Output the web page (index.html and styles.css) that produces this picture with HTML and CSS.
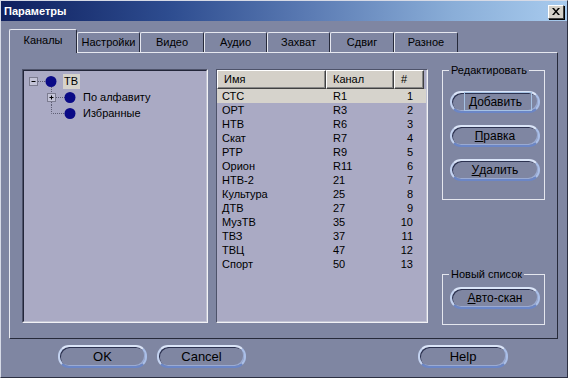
FILE: index.html
```html
<!DOCTYPE html>
<html>
<head>
<meta charset="utf-8">
<link rel="stylesheet" href="styles.css">
</head>
<body>
<div class="window">
  <div class="titlebar">
    <span class="title">Параметры</span>
    <span class="close"><svg width="8" height="7" viewBox="0 0 8 7"><path d="M0 0h2l2 2.4L6 0h2L5 3.5 8 7H6L4 4.6 2 7H0l3-3.5z" fill="#000"/></svg></span>
  </div>
  <div class="content">
    <div class="tabs">
      <div class="tab active">Каналы</div>
      <div class="tab narrow">Настройки</div>
      <div class="tab">Видео</div>
      <div class="tab narrow">Аудио</div>
      <div class="tab narrow">Захват</div>
      <div class="tab">Сдвиг</div>
      <div class="tab">Разное</div>
    </div>
    <div class="panel">
      <div class="tree sunken">
        <div class="sunken-in tree-body">
          <div class="node">
            <svg class="lines" width="38" height="16" viewBox="0 0 38 16">
              <rect x="5.5" y="4.5" width="8" height="8" fill="#c4c4d8" stroke="#7c7c90"/>
              <path d="M7.5 8.5h4" stroke="#000" fill="none"/>
              <path d="M14 8.5h8M27.5 14v2" stroke="#5e5e74" stroke-dasharray="1 1" fill="none"/>
              <circle cx="27" cy="8.5" r="5.5" fill="#0a0a86"/>
            </svg>
            <span class="label sel">ТВ</span>
          </div>
          <div class="node">
            <svg class="lines" width="58" height="16" viewBox="0 0 58 16">
              <path d="M27.5 0v4M27.5 13v3M32 8.5h9" stroke="#5e5e74" stroke-dasharray="1 1" fill="none"/>
              <rect x="23.5" y="4.5" width="8" height="8" fill="#c4c4d8" stroke="#7c7c90"/>
              <path d="M25.5 8.5h4M27.5 6.5v4" stroke="#000" fill="none"/>
              <circle cx="46" cy="8.5" r="5.5" fill="#0a0a86"/>
            </svg>
            <span class="label">По алфавиту</span>
          </div>
          <div class="node">
            <svg class="lines" width="58" height="16" viewBox="0 0 58 16">
              <path d="M27.5 0v8.5h13" stroke="#5e5e74" stroke-dasharray="1 1" fill="none"/>
              <circle cx="46" cy="8.5" r="5.5" fill="#0a0a86"/>
            </svg>
            <span class="label">Избранные</span>
          </div>
        </div>
      </div>

      <div class="list sunken">
        <div class="sunken-in list-body">
          <div class="list-head">
            <div class="hcell">Имя</div>
            <div class="hcell">Канал</div>
            <div class="hcell">#</div>
          </div>
          <div class="row selected"><span>СТС</span><span>R1</span><span class="num">1</span></div>
          <div class="row"><span>ОРТ</span><span>R3</span><span class="num">2</span></div>
          <div class="row"><span>НТВ</span><span>R6</span><span class="num">3</span></div>
          <div class="row"><span>Скат</span><span>R7</span><span class="num">4</span></div>
          <div class="row"><span>РТР</span><span>R9</span><span class="num">5</span></div>
          <div class="row"><span>Орион</span><span>R11</span><span class="num">6</span></div>
          <div class="row"><span>НТВ-2</span><span>21</span><span class="num">7</span></div>
          <div class="row"><span>Культура</span><span>25</span><span class="num">8</span></div>
          <div class="row"><span>ДТВ</span><span>27</span><span class="num">9</span></div>
          <div class="row"><span>МузТВ</span><span>35</span><span class="num">10</span></div>
          <div class="row"><span>ТВЗ</span><span>37</span><span class="num">11</span></div>
          <div class="row"><span>ТВЦ</span><span>47</span><span class="num">12</span></div>
          <div class="row"><span>Спорт</span><span>50</span><span class="num">13</span></div>
        </div>
      </div>

      <div class="side">
        <fieldset class="group edit">
          <legend>Редактировать</legend>
          <button class="btn"><span class="focus-box"><u>Д</u>обавить</span></button>
          <button class="btn"><u>П</u>равка</button>
          <button class="btn"><u>У</u>далить</button>
        </fieldset>
        <fieldset class="group scan">
          <legend>Новый список</legend>
          <button class="btn"><u>А</u>вто-скан</button>
        </fieldset>
      </div>
    </div>
    <div class="footer">
      <button class="btn big">OK</button>
      <button class="btn big">Cancel</button>
      <button class="btn big help">Help</button>
    </div>
  </div>
</div>
</body>
</html>
```

FILE: styles.css
```css
* { box-sizing: border-box; }
html, body { margin: 0; padding: 0; }
body {
  width: 568px;
  height: 378px;
  overflow: hidden;
  background: #7f86a2;
  font-family: "Liberation Sans", Arial, sans-serif;
  font-size: 11px;
  color: #000;
}
.window {
  width: 568px;
  height: 378px;
  background: #7f86a2;
  border: 1px solid;
  border-color: #d6dae6 #2c3042 #2c3042 #d6dae6;
  display: flex;
  flex-direction: column;
}
.titlebar {
  height: 20px;
  background: linear-gradient(to right, #0e1f5e 0%, #2e4d90 30%, #5c7cb4 55%, #8aaed8 80%, #a8cbee 100%);
  display: flex;
  align-items: center;
  justify-content: space-between;
  padding: 0 3px 0 3px;
}
.title {
  color: #fff;
  font-weight: bold;
  font-size: 11px;
}
.close {
  width: 16px;
  height: 14px;
  background: #d4d0c8;
  border: 1px solid;
  border-color: #fff #404040 #404040 #fff;
  box-shadow: 1px 1px 0 #000;
  display: flex;
  align-items: center;
  justify-content: center;
  margin-top: 1px;
}
.content {
  padding: 8px 8px 0 8px;
  display: flex;
  flex-direction: column;
}
.tabs {
  display: flex;
  align-items: flex-end;
  height: 23px;
}
.tab {
  width: 64px;
  height: 20px;
  border-top: 1px solid #e6e8f0;
  border-left: 1px solid #e6e8f0;
  border-right: 1px solid #262a3a;
  border-radius: 2px 2px 0 0;
  display: flex;
  align-items: center;
  justify-content: center;
  padding-bottom: 1px;
  white-space: nowrap;
}
.tab.narrow { width: 63px; }
.tab.active {
  width: 68px;
  height: 24px;
  margin-bottom: -1px;
  position: relative;
  z-index: 1;
  background: #7f86a2;
  padding-bottom: 3px;
}
.panel {
  width: 549px;
  height: 287px;
  border: 1px solid;
  border-color: #e6e8f0 #262a3a #262a3a #e6e8f0;
  padding: 16px 0 0 12px;
  display: flex;
  align-items: flex-start;
}
.sunken {
  border: 1px solid;
  border-color: #4e536a #f2f2f6 #f2f2f6 #4e536a;
  height: 254px;
  flex: none;
}
.sunken-in {
  height: 100%;
  border: 1px solid;
  border-color: #23263a #c2c4d4 #c2c4d4 #23263a;
  background: #aaaac4;
}
.tree { width: 186px; margin-right: 8px; }
.tree-body { padding: 2px 0 0 0; }
.node {
  display: flex;
  align-items: center;
  height: 16px;
}
.lines { flex: none; display: block; margin-right: 1px; }
.label { line-height: 15px; white-space: nowrap; }
.label.sel { background: #d6d3cc; padding: 0 2px 0 1px; }

.list { width: 212px; }
.list-body { border-top: none; border-left: none; }
.list-head {
  display: grid;
  grid-template-columns: 109px 68px 30px;
  height: 19px;
}
.hcell {
  background: #d4d0c8;
  border: 1px solid;
  border-color: #fff #404040 #404040 #fff;
  box-shadow: inset -1px -1px 0 #888;
  padding-left: 6px;
  line-height: 16px;
}
.row {
  display: grid;
  grid-template-columns: 109px 68px 30px;
  height: 14px;
  line-height: 14px;
}
.row span:first-child { padding-left: 5px; }
.row span:nth-child(2) { padding-left: 7px; }
.row .num { text-align: right; padding-right: 11px; }
.row.selected { background: #d6d3cc; }

.side {
  width: 103px;
  margin-left: 14px;
  margin-top: -5px;
  display: flex;
  flex-direction: column;
}
.group {
  margin: 0;
  width: 103px;
  min-width: 0;
  border: 1px solid #e4e6ee;
  padding: 14px 0 18px 7px;
}
.group legend {
  padding: 0 2px;
  margin-left: -1px;
  line-height: 13px;
  font-size: 11px;
  white-space: nowrap;
}
.group .btn + .btn { margin-top: 12px; }
.group.scan { margin-top: 68px; padding-top: 6px; padding-bottom: 15px; }

.btn {
  display: flex;
  align-items: center;
  justify-content: center;
  width: 90px;
  height: 22px;
  margin: 0;
  padding: 0 0 1px 0;
  font-family: "Liberation Sans", Arial, sans-serif;
  font-size: 12px;
  color: #000;
  background: #7f86a2;
  border: 2px solid;
  border-color: #dbe5f8 #aabfe8 #6b86c6 #c3d2f0;
  border-radius: 11px;
  box-shadow: inset 1px 1px 0 #2c3250, inset -1px -1px 0 #9aaad2;
}
.btn u { text-decoration: underline; text-underline-offset: 1px; }
.focus-box {
  display: flex;
  align-items: center;
  height: 19px;
  border: 1px solid #a6c2e4;
  padding: 0 9px 0 4px;
  margin-left: 6px;
}
.footer {
  display: flex;
  margin-top: 6px;
  padding-left: 49px;
}
.btn.big {
  width: 89px;
  height: 23px;
  font-size: 13px;
}
.btn.big + .btn.big { margin-left: 10px; }
.btn.big + .btn.big.help { margin-left: 172px; width: 90px; }
```
